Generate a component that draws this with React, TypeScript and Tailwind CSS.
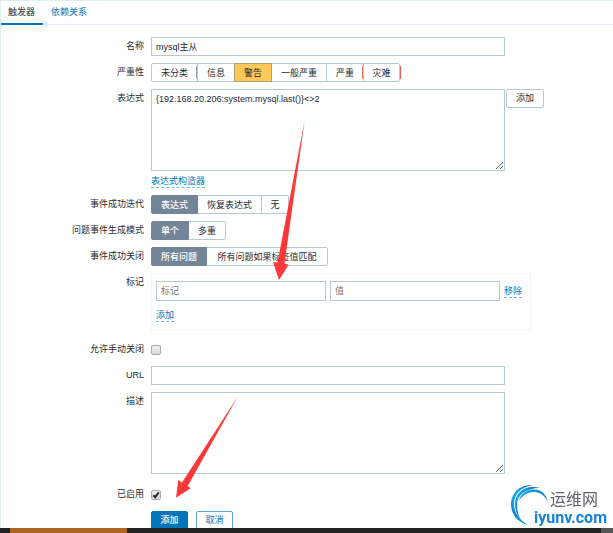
import { useState } from 'react';
import type { ReactNode } from 'react';

const control = 'border border-[#b8c7d6] bg-white text-[#1f2c33] outline-none';
const link = 'block w-fit border-b border-dashed border-[#6fb5df] text-[#0275b8] leading-3 no-underline';

function Row({ label, htmlFor, children }: { label?: string; htmlFor?: string; children: ReactNode }) {
  return (
    <div className="grid grid-cols-[144px_1fr] gap-x-[7px]">
      {label ? (
        <label htmlFor={htmlFor} className="text-right leading-[19px]">
          {label}
        </label>
      ) : (
        <span />
      )}
      <div className="min-w-0">{children}</div>
    </div>
  );
}

type Option = { text: string; width: string; tone?: string; edge?: string };

function Segments({ name, label, options, initial }: { name: string; label: string; options: Option[]; initial: number }) {
  const [selected, setSelected] = useState(initial);
  return (
    <div role="radiogroup" aria-label={label} className="flex h-[19px]">
      {options.map((o, i) => {
        const on = i === selected;
        const look = on
          ? o.tone ?? 'z-10 border-[#738598] bg-[#738598] text-white font-medium'
          : 'border-[#b8c7d6] bg-white';
        return (
          <label
            key={o.text}
            className={`relative -mr-px flex justify-center whitespace-nowrap border leading-[18px] first:rounded-l-xs last:rounded-r-xs ${o.width} ${look}`}
          >
            <input type="radio" name={name} className="sr-only" checked={on} onChange={() => setSelected(i)} />
            {o.text}
            {o.edge && <span className={`absolute top-[2px] bottom-[2px] w-px ${o.edge}`} />}
          </label>
        );
      })}
    </div>
  );
}

function Check({ id, initial }: { id: string; initial: boolean }) {
  const [on, setOn] = useState(initial);
  return (
    <div className="flex h-[19px] items-center">
      <span className="grid size-[10px] place-items-center">
        <input
          id={id}
          type="checkbox"
          checked={on}
          onChange={() => setOn(!on)}
          className="col-start-1 row-start-1 size-[10px] appearance-none rounded-xs border border-[#a8a8a8] bg-linear-to-b from-[#f0f0f0] to-[#d9d9d9]"
        />
        {on && (
          <svg viewBox="0 0 10 10" className="pointer-events-none col-start-1 row-start-1 size-[10px]">
            <path d="M2.3 5.2 4.2 7.2 7.8 2.4" fill="none" stroke="#2b2b2b" strokeWidth="2" />
          </svg>
        )}
      </span>
    </div>
  );
}

function Arrows() {
  return (
    <svg width="613" height="533" className="pointer-events-none absolute top-0 left-0 z-20" aria-hidden="true">
      <g fill="#fd3838">
        <path d="M303.7 119 283.5 262.5 287.7 263.7 278 279 272 261 276.5 261.5Z" />
        <path d="M236.7 395.7 186.7 485 189.7 487.3 175 496.7 177.3 479 181 481.5Z" />
      </g>
    </svg>
  );
}

function Watermark() {
  return (
    <div className="fixed right-[6px] bottom-[7px] z-20 flex items-end">
      <svg width="40" height="42" viewBox="0 0 40 42" className="-mr-[16px]" aria-hidden="true">
        <defs>
          <linearGradient id="swoosh" x1="0" y1="1" x2="1" y2="0">
            <stop offset="0" stopColor="#1464b4" />
            <stop offset="0.4" stopColor="#12a8ec" />
            <stop offset="0.7" stopColor="#1597dd" />
            <stop offset="1" stopColor="#1254a0" />
          </linearGradient>
        </defs>
        <g fill="url(#swoosh)">
          <path d="M23 1C10 0 1 9 1 20c0 10 6 18 17 21C10 36 4 29 4 20 4 10 11 3 23 1Z" />
          <path d="M30 4C15 0 5 9 5 20c0 6 2 11 5 15-2-5-3-10-3-15C7 12 15 4 30 4Z" />
          <path d="M38 18C36 9 30 5 23 5.500 16 6 11 10 9 16c4-5 9-8 15-8 6 0 11 4 14 10Z" />
        </g>
      </svg>
      <div>
        <div className="pl-4 text-[16px] leading-[19px] text-[#606268]">运维网</div>
        <div className="font-[Roboto] text-[16px] leading-[17px] font-bold text-[#1583d8]">iyunv.com</div>
      </div>
    </div>
  );
}

export default function App() {
  return (
    <div className="relative h-screen overflow-hidden border-t border-l border-[#dff0ee] bg-white font-['Liberation_Sans','Noto_Sans_CJK_SC',sans-serif] text-[9px] text-[#1f2c33]">
      <nav className="flex h-[24px] border-b border-[#ebeef8]">
        <a href="#trigger" className="h-[24px] border-b-2 border-[#0275b8] pr-2 pl-[7px] leading-[23px] text-[#1f2c33]">
          触发器
        </a>
        <a href="#dependencies" className="px-2 leading-[23px] text-[#0275b8]">
          依赖关系
        </a>
      </nav>

      <form className="-ml-px flex flex-col gap-[7px] pt-3" onSubmit={(e) => e.preventDefault()}>
        <Row label="名称" htmlFor="name">
          <input id="name" defaultValue="mysql主从" className={`block h-[19px] w-full max-w-[354px] px-1 ${control}`} />
        </Row>

        <Row label="严重性">
          <Segments
            name="severity"
            label="严重性"
            initial={2}
            options={[
              { text: '未分类', width: 'w-[47px]', edge: 'right-0 bg-[#8fa3b5]' },
              { text: '信息', width: 'w-[38px]' },
              { text: '警告', width: 'w-[38px]', tone: 'z-10 border-[#a8a27c] bg-[#ffc859]' },
              { text: '一般严重', width: 'w-[56px]' },
              { text: '严重', width: 'w-[38px]', edge: 'right-0 bg-[#e97659]' },
              { text: '灾难', width: 'w-[37px]', edge: '-right-[2px] bg-[#e45959]' },
            ]}
          />
        </Row>

        <Row label="表达式" htmlFor="expression">
          <div className="flex items-start gap-px">
            <textarea
              id="expression"
              defaultValue="{192.168.20.206:system.mysql.last()}<>2"
              className={`block h-[82px] w-full max-w-[354px] px-1 py-[3px] leading-3 ${control}`}
            />
            <button type="button" className={`h-[19px] w-[38px] shrink-0 rounded-xs ${control}`}>
              添加
            </button>
          </div>
          <a href="#constructor" className={`mt-1 ${link}`}>
            表达式构造器
          </a>
        </Row>

        <Row label="事件成功迭代">
          <Segments
            name="recovery"
            label="事件成功迭代"
            initial={0}
            options={[
              { text: '表达式', width: 'w-[47px]' },
              { text: '恢复表达式', width: 'w-[65px]' },
              { text: '无', width: 'w-[28px]' },
            ]}
          />
        </Row>

        <Row label="问题事件生成模式">
          <Segments
            name="mode"
            label="问题事件生成模式"
            initial={0}
            options={[
              { text: '单个', width: 'w-[38px]' },
              { text: '多重', width: 'w-[38px]' },
            ]}
          />
        </Row>

        <Row label="事件成功关闭">
          <Segments
            name="close"
            label="事件成功关闭"
            initial={0}
            options={[
              { text: '所有问题', width: 'w-[56px]' },
              { text: '所有问题如果标签值匹配', width: 'w-[122px]' },
            ]}
          />
        </Row>

        <Row label="标记" htmlFor="tag">
          <div className="mb-[3px] h-[57px] max-w-[380px] border border-[#f0f1fb] px-1 pt-[7px]">
            <div className="flex items-center gap-1">
              <input id="tag" placeholder="标记" className={`h-5 w-[170px] px-1 placeholder:text-[#757575] ${control}`} />
              <input aria-label="值" placeholder="值" className={`h-5 w-[170px] px-1 placeholder:text-[#757575] ${control}`} />
              <a href="#remove" className={link}>
                移除
              </a>
            </div>
            <a href="#add" className={`mt-2 ${link}`}>
              添加
            </a>
          </div>
        </Row>

        <Row label="允许手动关闭" htmlFor="manual">
          <Check id="manual" initial={false} />
        </Row>

        <Row label="URL" htmlFor="url">
          <input id="url" className={`block h-[19px] w-full max-w-[354px] px-1 ${control}`} />
        </Row>

        <Row label="描述" htmlFor="description">
          <textarea id="description" className={`mb-1 block h-[82px] w-full max-w-[354px] px-1 py-[3px] ${control}`} />
        </Row>

        <Row label="已启用" htmlFor="enabled">
          <Check id="enabled" initial />
        </Row>

        <Row>
          <div className="flex gap-2">
            <button type="submit" className="h-[19px] w-[37px] rounded-xs border border-[#0275b8] bg-[#0275b8] font-medium text-white">
              添加
            </button>
            <button type="button" className="h-[19px] w-[37px] rounded-xs border border-[#5ba8d6] bg-white text-[#0275b8]">
              取消
            </button>
          </div>
        </Row>
      </form>

      <Arrows />
      <Watermark />

      <div className="fixed inset-x-0 bottom-0 z-30 flex h-[5px] bg-[#222222] pl-[10px]">
        <div className="w-[117px] bg-[#ad6523]" />
        <div className="ml-auto w-3 bg-[#555555]" />
      </div>
    </div>
  );
}
